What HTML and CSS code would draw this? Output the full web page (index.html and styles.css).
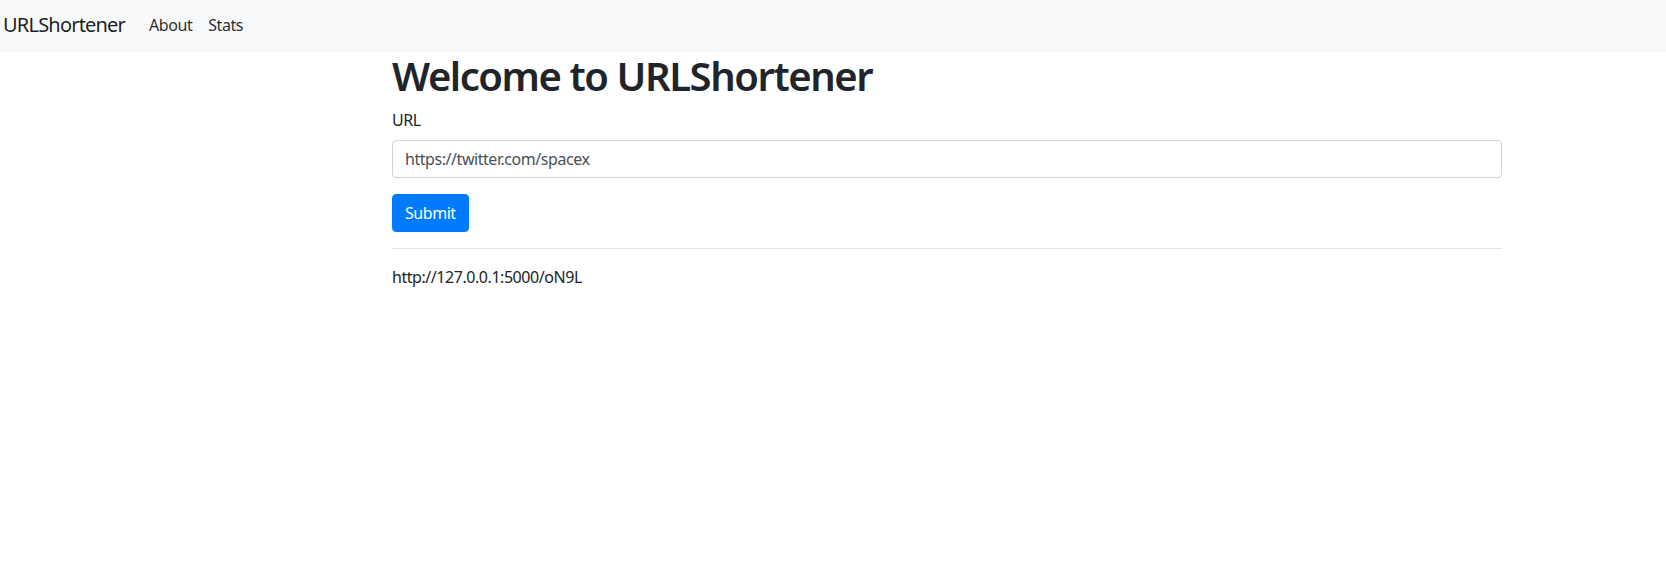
FILE: index.html
```html
<!DOCTYPE html>
<html lang="en">
<head>
<meta charset="utf-8">
<title>URLShortener</title>
<link rel="stylesheet" href="styles.css">
</head>
<body>
<nav class="navbar">
  <a class="brand" href="#">URLShortener</a>
  <ul class="nav">
    <li><a class="nav-link" href="#">About</a></li>
    <li><a class="nav-link" href="#">Stats</a></li>
  </ul>
</nav>
<main class="container">
  <h1 class="title">Welcome to URLShortener</h1>
  <form class="form">
    <div class="form-group">
      <label class="label" for="url">URL</label>
      <input class="input" id="url" type="text" value="https://twitter.com/spacex">
    </div>
    <button class="btn" type="button">Submit</button>
  </form>
  <hr class="rule">
  <p class="result">http://127.0.0.1:5000/oN9L</p>
</main>
</body>
</html>
```
FILE: styles.css
```css
* { box-sizing: border-box; }
html, body { margin: 0; padding: 0; }
body {
  font-family: "Noto Sans", "Open Sans", sans-serif;
  font-size: 16px;
  line-height: 1.5;
  letter-spacing: -0.028em;
  color: #212529;
  background: #fff;
}
.navbar {
  display: flex;
  align-items: center;
  height: 52px;
  padding: 0 3px 3px;
  background: #f8f9fa;
}
.brand {
  font-size: 20px;
  line-height: 30px;
  letter-spacing: -0.04em;
  color: rgba(0,0,0,.9);
  text-decoration: none;
  margin-right: 16px;
}
.nav {
  display: flex;
  list-style: none;
  margin: 0;
  padding: 0;
}
.nav-link {
  display: block;
  padding: 8px 8px;
  color: rgba(0,0,0,.85);
  text-decoration: none;
}
.container {
  width: 1110px;
  margin-left: 392px;
}
.title {
  margin: 0 0 8px;
  font-size: 40px;
  font-weight: 600;
  line-height: 1.2;
  letter-spacing: -0.036em;
}
.form-group { margin-bottom: 16px; }
.label {
  display: inline-block;
  margin-bottom: 8px;
}
.input {
  display: block;
  width: 100%;
  height: 38px;
  padding: 6px 12px;
  font: inherit;
  letter-spacing: inherit;
  color: #495057;
  background: #fff;
  border: 1px solid #ced4da;
  border-radius: 4px;
}
.btn {
  display: inline-block;
  height: 38px;
  padding: 6px 12px;
  font: inherit;
  letter-spacing: inherit;
  color: #fff;
  background: #007bff;
  border: 1px solid #007bff;
  border-radius: 4px;
}
.rule {
  margin: 16px 0;
  border: 0;
  border-top: 1px solid rgba(0,0,0,.1);
}
.result { margin: 0 0 16px; }
```
